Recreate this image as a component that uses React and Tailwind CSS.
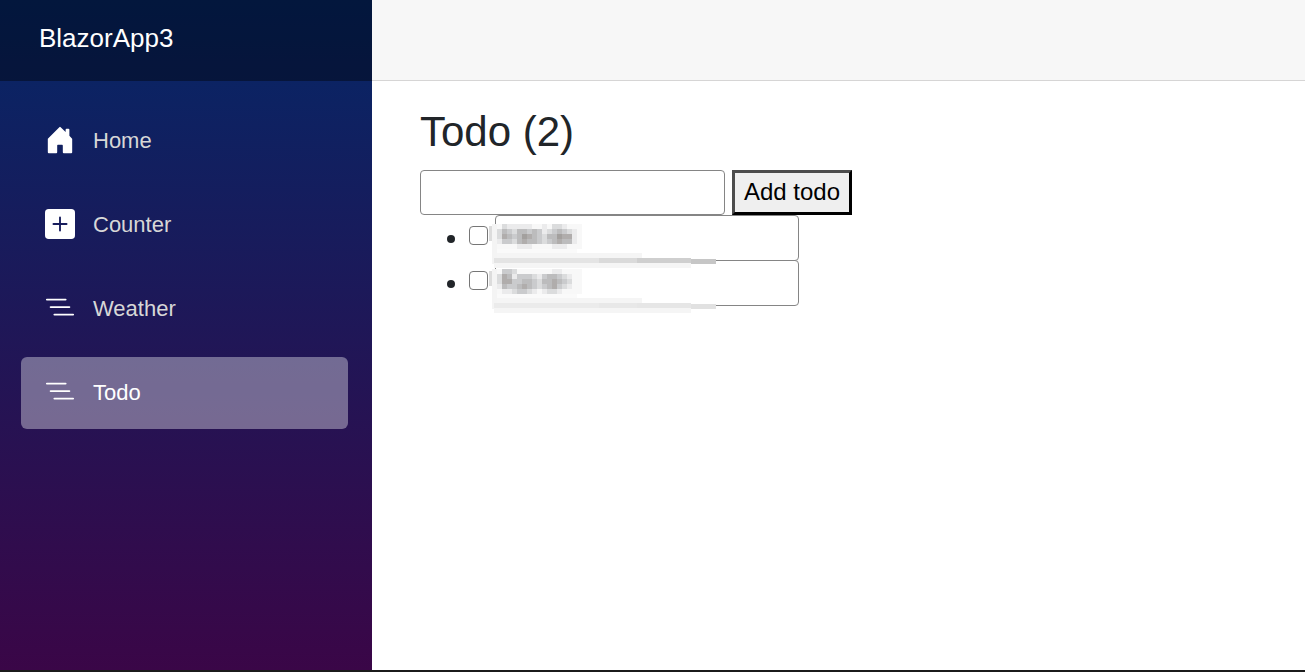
import React, { useState } from "react";
import { BsHouseDoorFill, BsPlusSquareFill, BsListNested } from "react-icons/bs";

const NAV_ITEMS = [
  { label: "Home", icon: BsHouseDoorFill },
  { label: "Counter", icon: BsPlusSquareFill },
  { label: "Weather", icon: BsListNested },
  { label: "Todo", icon: BsListNested, active: true },
];

// Grey levels of the pixelated titles, one string per 5px row
const MASKS = [
  {
    cells: [
      "fdeeeeeffefddefff",
      "dbcdbbcbcedcbcdef",
      "dabcb9abcdbb9aaef",
      "eccdbabbcdcbabbef",
      "ffffeeeffffeeefff",
    ],
    edge: ["#e4e4e4", "#dadada", "#cfcfcf", "#c6c6c6"],
  },
  {
    cells: [
      "fccdfffffffeeffff",
      "dabecccdecbbcdeff",
      "daaccbbcdbbabcdff",
      "ebccbabcdcbacdeff",
      "feedccdefeddeffff",
    ],
    edge: ["#ebebeb", "#e8e8e8", "#e6e6e6", "#e1e1e1"],
  },
];

const SHADES = {
  9: "#a3a09e",
  a: "#b0adac",
  b: "#bcbcbd",
  c: "#cacbcd",
  d: "#dbdcdd",
  e: "#ebebec",
  f: "#f8f8f8",
};

function Mosaic({ cells, edge }) {
  return (
    <svg
      className="absolute left-[20px] top-[9px] z-10 pointer-events-none"
      width="228"
      height="44"
      shapeRendering="crispEdges"
      aria-hidden="true"
    >
      <rect x="0" y="2" width="202" height="42" fill="#fff" />
      <rect x="202" y="33" width="25" height="8" fill="#fff" />
      <rect x="0" y="2" width="3" height="15" fill="#dcdcdc" />
      <rect x="3" y="0" width="5" height="40" fill="#f4f4f4" />
      <rect x="8" y="2" width="5" height="32" fill="#efefef" />
      {/* Smeared lower edge */}
      <rect x="8" y="24" width="80" height="5" fill="#fafafa" />
      <rect x="8" y="29" width="145" height="5" fill="#f5f5f5" />
      <rect x="5" y="34" width="105" height="5" fill={edge[0]} />
      <rect x="110" y="34" width="38" height="5" fill={edge[1]} />
      <rect x="148" y="34" width="54" height="5" fill={edge[2]} />
      <rect x="202" y="35" width="25" height="5" fill={edge[3]} />
      <rect x="5" y="39" width="197" height="5" fill="#f5f5f5" />
      {cells.map((row, y) =>
        row.split("").map((c, x) => (
          <rect key={`${y}-${x}`} x={8 + x * 5} y={y * 5} width="5" height="5" fill={SHADES[c]} />
        ))
      )}
    </svg>
  );
}

export default function App() {
  const [title, setTitle] = useState("");

  return (
    <div className="flex flex-col min-h-screen bg-white text-[#212529] font-['Liberation_Sans',Arial,sans-serif]">
      <div className="flex flex-1">
        <aside className="w-[372px] shrink-0 bg-linear-to-b/srgb from-[#052767] to-[#3a0647]">
          <div className="h-[81px] pl-[39px] pb-1.5 flex items-center bg-black/40">
            <a href="#" className="text-[26px] leading-8 text-white">BlazorApp3</a>
          </div>

          <nav className="flex flex-col gap-3 pt-6 pl-[21px] pr-6">
            {NAV_ITEMS.map(({ label, icon: Icon, active }) => (
              <a
                key={label}
                href="#"
                aria-current={active ? "page" : undefined}
                className={`flex items-center gap-[18px] h-[72px] px-6 pb-0.5 rounded-md text-[22px] ${
                  active ? "bg-white/37 text-white" : "text-[#d7d7d7]"
                }`}
              >
                <Icon className="size-[30px] text-white" />
                {label}
              </a>
            ))}
          </nav>
        </aside>

        <main className="flex-1 min-w-0">
          <div className="h-[81px] bg-[#f7f7f7] border-b border-[#d6d5d5]" />

          <article className="px-12 pt-[26px]">
            <h1 className="text-[42px] leading-[50px] mb-[13px]">Todo (2)</h1>

            <div className="flex gap-[7px] h-[45px]">
              <input
                aria-label="New todo"
                value={title}
                onChange={(e) => setTitle(e.target.value)}
                className="w-[305px] px-1 text-2xl border border-[#858585] rounded-sm bg-white"
              />
              <button
                type="button"
                className="w-[120px] pb-0.5 text-2xl text-black whitespace-nowrap bg-[#efefef] border-3 border-t-[#4c4c4c] border-l-[#4c4c4c] border-r-black border-b-black"
              >
                Add todo
              </button>
            </div>

            <ul>
              {MASKS.map((mask, i) => (
                <li key={i} className="flex items-center h-[45px] pl-[27px]">
                  <span className="size-2 mt-0.5 mr-[14px] rounded-full bg-[#212529]" />
                  <div className="relative flex items-center gap-[7px]">
                    <input
                      type="checkbox"
                      aria-label={`Todo ${i + 1} done`}
                      className="appearance-none size-[19px] mb-1 border border-[#767676] rounded-sm bg-white"
                    />
                    <input
                      aria-label={`Todo ${i + 1} title`}
                      className="w-[304px] h-[46px] px-1 text-2xl border border-[#858585] rounded-sm bg-white"
                    />
                    <Mosaic cells={mask.cells} edge={mask.edge} />
                  </div>
                </li>
              ))}
            </ul>
          </article>
        </main>
      </div>
      <footer className="h-[2px] bg-[#1b1b1b]" />
    </div>
  );
}
